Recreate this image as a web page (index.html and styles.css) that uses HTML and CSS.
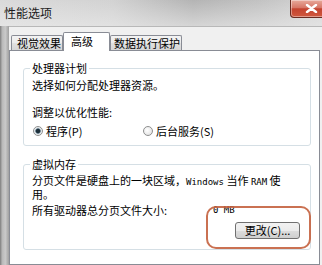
FILE: index.html
```html
<!DOCTYPE html>
<html lang="zh-CN">
<head>
<meta charset="utf-8">
<title>性能选项</title>
<link rel="stylesheet" href="styles.css">
</head>
<body>
<div class="window">
  <div class="titlebar">
    <span class="title">性能选项</span>
    <div class="close"><svg width="13" height="9" viewBox="0 0 13 9"><path d="M2 1 L11 8 M11 1 L2 8" stroke="#fff" stroke-width="2.4" stroke-linecap="round"/></svg></div>
  </div>
  <div class="frame">
    <div class="frame-left"></div>
    <div class="client">
      <div class="tabs">
        <div class="tab t1">视觉效果</div>
        <div class="tab active t2">高级</div>
        <div class="tab t3">数据执行保护</div>
      </div>
      <div class="panel">
        <fieldset class="group g1">
          <legend>处理器计划</legend>
          <p class="line">选择如何分配处理器资源。</p>
          <p class="line sub">调整以优化性能:</p>
          <div class="radios">
            <label class="radio"><span class="dot checked"></span>程序(P)</label>
            <label class="radio"><span class="dot"></span>后台服务(S)</label>
          </div>
        </fieldset>
        <fieldset class="group g2">
          <legend>虚拟内存</legend>
          <div class="desc">
            <span class="line">分页文件是硬盘上的一块区域，<span class="mono">Windows</span> 当作 <span class="mono">RAM</span> 使</span>
            <span class="line">用。</span>
          </div>
          <div class="size"><span class="size-label">所有驱动器总分页文件大小:</span><span class="mono">0 MB</span></div>
          <div class="actions"><button class="btn">更改(C)...</button></div>
        </fieldset>
      </div>
    </div>
  </div>
  <div class="mark"></div>
</div>
</body>
</html>
```

FILE: styles.css
```css
* { box-sizing: border-box; }
html, body { margin: 0; padding: 0; }
body {
  width: 322px;
  height: 265px;
  overflow: hidden;
  font-family: "Noto Sans CJK SC", "Microsoft YaHei", sans-serif;
  font-size: 11px;
  color: #000;
  background: #f0f0f0;
}
.window {
  position: relative;
  width: 322px;
  height: 265px;
  display: flex;
  flex-direction: column;
}
.titlebar {
  height: 26px;
  flex: none;
  display: flex;
  justify-content: space-between;
  align-items: flex-start;
  background:
    linear-gradient(to bottom, rgba(255,255,255,0) 0%, rgba(235,235,235,0.6) 100%),
    linear-gradient(to right, #dadada 0%, #d2d2d2 35%, #b4b4b4 60%, #c2c2c2 80%, #d6d6d6 100%);
}
.title {
  font-size: 12px;
  line-height: 26px;
  padding-left: 4px;
  color: #1a1a1a;
}
.close {
  width: 43px;
  height: 18px;
  margin-right: -11px;
  border: 1px solid #6a2c22;
  border-top: none;
  border-radius: 0 0 4px 4px;
  background: linear-gradient(#e8aa9c, #d77767 45%, #c4432f 52%, #d0593f);
  box-shadow: inset 0 0 0 1px rgba(255,255,255,0.4);
  display: flex;
  align-items: center;
  justify-content: center;
}
.frame {
  flex: 1;
  display: flex;
  min-height: 0;
}
.frame-left {
  width: 9px;
  flex: none;
  background: linear-gradient(to right, #7d7d7d, #b9b9b9 25%, #c9c9c9 60%, #a0a0a0);
}
.client {
  flex: 1;
  padding: 6px 2px 0 0;
  background: #f0f0f0;
  border-top: 1px solid #b8b8b8;
  display: flex;
  flex-direction: column;
  min-width: 0;
}
.tabs {
  display: flex;
  align-items: flex-end;
  height: 17px;
  padding-left: 2px;
  position: relative;
  z-index: 1;
}
.tab {
  height: 15px;
  line-height: 14px;
  border: 1px solid #898c95;
  border-bottom: none;
  border-radius: 2px 2px 0 0;
  background: linear-gradient(#f3f3f3, #ebebeb 50%, #e0e0e0 51%, #d6d6d6);
  padding-left: 5px;
  white-space: nowrap;
}
.t1 { width: 52px; }
.t2 { width: 47px; }
.t3 { width: 72px; padding-left: 3px; }
.tab.active {
  height: 19px;
  line-height: 17px;
  background: #fff;
  margin-bottom: -1px;
  padding-left: 7px;
}
.panel {
  flex: 1;
  border: 1px solid #898c95;
  background: #fff;
  padding: 11px 8px 0 13px;
}
.group {
  margin: 0;
  border: 1px solid #d5dfe5;
  border-radius: 3px;
  padding: 5px 8px 8px 8px;
  min-width: 0;
}
.g2 {
  margin-top: 12px;
  padding: 4px 8px 10px 8px;
}
legend {
  padding: 0 2px;
  margin-left: -2px;
  line-height: 12px;
  font-size: 11px;
}
.line {
  display: block;
  margin: 0;
  line-height: 12px;
  white-space: nowrap;
}
.desc { display: flex; flex-direction: column; }
.sub { margin-top: 15px; }
.radios {
  display: grid;
  grid-template-columns: 110px auto;
  margin-top: 7px;
  height: 12px;
  line-height: 12px;
}
.radio {
  display: flex;
  align-items: center;
  gap: 3px;
}
.dot {
  width: 10px;
  height: 10px;
  margin-left: 1px;
  border-radius: 50%;
  border: 1px solid #8e8f8f;
  background: radial-gradient(circle at 40% 40%, #ffffff, #dcdcdc);
}
.dot.checked {
  background: radial-gradient(circle, #1d2f3a 0 1.8px, #5d7686 2.4px, #d6dee3 3px, #f4f4f4 4px);
}
.mono {
  font-family: "DejaVu Sans Mono", monospace;
  font-size: 9px;
  line-height: 12px;
}
.size {
  display: flex;
  margin-top: 4px;
  line-height: 12px;
}
.size-label { width: 181px; flex: none; }
.actions {
  display: flex;
  justify-content: flex-end;
  margin-top: 6px;
  padding-right: 2px;
}
.btn {
  width: 65px;
  height: 17px;
  padding: 0;
  font-family: inherit;
  font-size: 11px;
  line-height: 15px;
  color: #000;
  border: 1px solid #707070;
  border-radius: 3px;
  background: linear-gradient(#f2f2f2, #ebebeb 50%, #dddddd 51%, #cfcfcf);
}
.mark {
  position: absolute;
  left: 206px;
  top: 206px;
  width: 105px;
  height: 43px;
  border: 2px solid #c4623f;
  border-radius: 10px;
  opacity: 0.9;
}
```
